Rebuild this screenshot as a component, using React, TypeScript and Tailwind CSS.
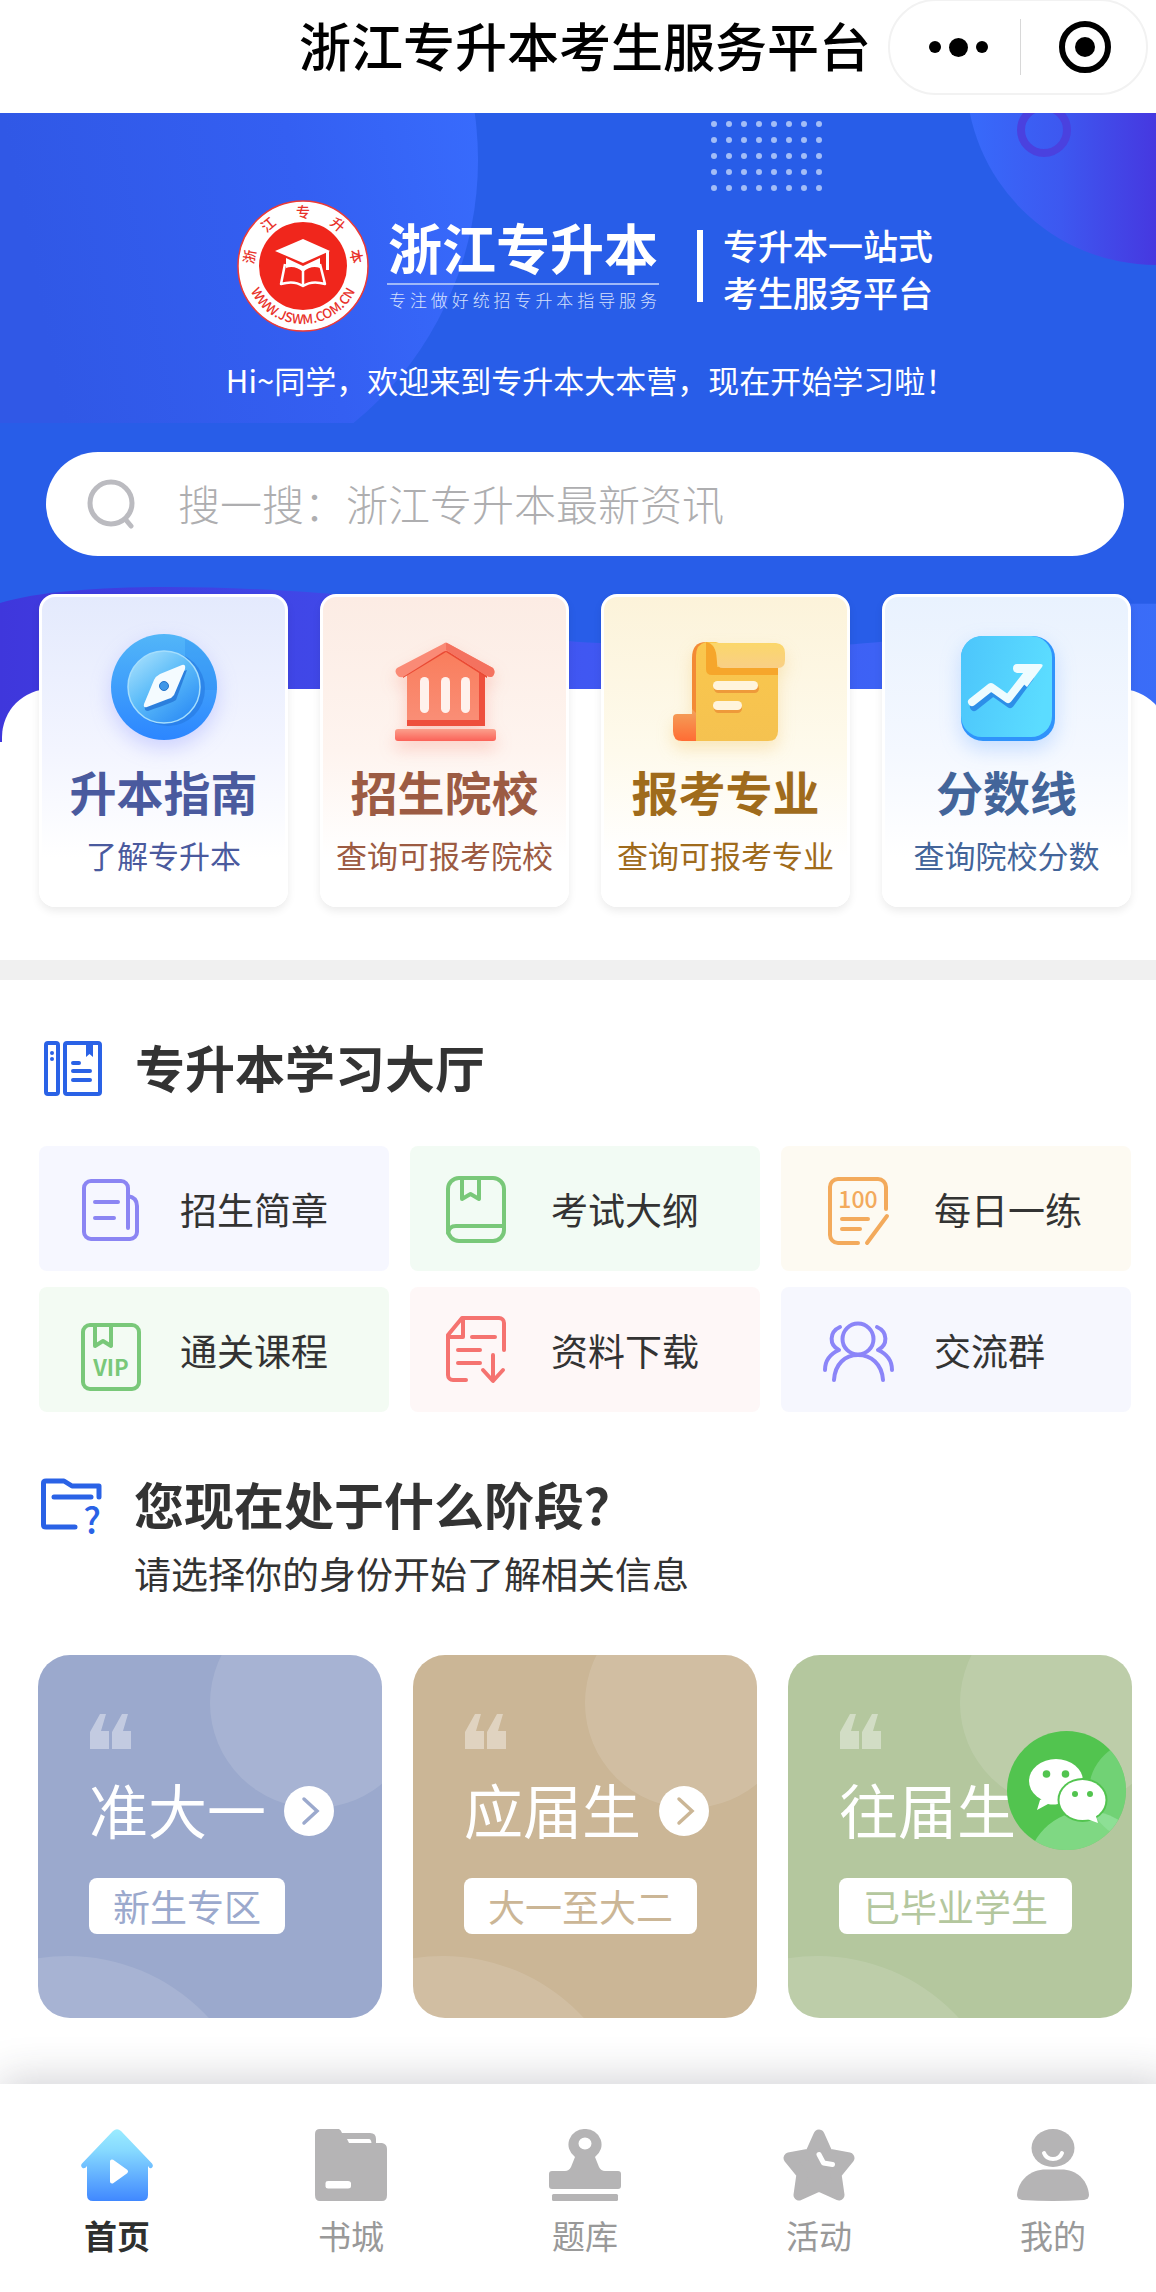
import React from 'react';

/* ---------- feature card icons ---------- */

const CompassIcon = () => (
  <svg viewBox="0 0 112 112" className="size-28 overflow-visible drop-shadow-[0_8px_10px_rgba(120,130,255,0.3)]">
    <defs>
      <linearGradient id="compassOuter" x1="0" y1="0" x2="0" y2="1">
        <stop offset="0" stopColor="#52b6f8" />
        <stop offset="1" stopColor="#2c86ff" />
      </linearGradient>
      <linearGradient id="compassInner" x1="0" y1="0" x2="0.8" y2="1">
        <stop offset="0" stopColor="#b4e6fd" />
        <stop offset="0.5" stopColor="#5cbcf9" />
        <stop offset="1" stopColor="#2b8bf5" />
      </linearGradient>
    </defs>
    <circle cx="56" cy="53" r="53" fill="url(#compassOuter)" />
    <path d="M77 5 A53 53 0 0 1 109 56 H77 Z" fill="#2b8df2" opacity="0.35" />
    <circle cx="60" cy="55" r="37" fill="#2478e0" opacity="0.6" />
    <circle cx="56" cy="53" r="36" fill="url(#compassInner)" stroke="#a5defd" strokeWidth="1.5" />
    <path d="M79 36 L68 66 Q66 68 40 77 Q36 77 37 73 L49 46 Z" fill="#2b7fdd" />
    <path d="M74 31 Q78 30 77 35 L66 61 Q64 64 60 65 L39 73 Q35 74 36 70 L46 46 Q48 42 52 40 Z" fill="#f4fbff" />
    <circle cx="56" cy="52" r="4.5" fill="#3f97e8" stroke="#2372c8" strokeWidth="1" />
  </svg>
);

const SchoolIcon = () => (
  <svg viewBox="0 0 112 112" className="size-28 overflow-visible drop-shadow-[0_8px_8px_rgba(245,110,90,0.28)]">
    <defs>
      <linearGradient id="schoolBody" x1="0" y1="0" x2="0" y2="1">
        <stop offset="0" stopColor="#f97c5a" />
        <stop offset="1" stopColor="#fa8f78" />
      </linearGradient>
      <linearGradient id="schoolBase" x1="0" y1="0" x2="0" y2="1">
        <stop offset="0" stopColor="#fba08c" />
        <stop offset="1" stopColor="#fb6258" />
      </linearGradient>
    </defs>
    <path d="M18 38 L57 12 L96 38 V92 H18 Z" fill="url(#schoolBody)" />
    <path d="M90 38 H96 V92 H18 V86 H90 Z" fill="#ee4f3c" />
    <path d="M14 44 L57 18 L98 44 V38 L57 12 L14 38 Z" fill="#ea4a34" />
    <path d="M54 10 Q57 7 60 10 L104 34 Q107 38 104 42 Q102 44 98 42 L60 18 Q57 16 54 18 L14 43 Q10 44 8 41 Q5 37 8 34 Z" fill="#fa8a76" />
    <path d="M57 9 V16 L98 42 Q102 44 104 42 Q107 38 104 34 L60 10 Z" fill="#f4725f" />
    <g fill="#fff1ec">
      <rect x="31" y="43" width="9" height="36" rx="4.5" />
      <rect x="52" y="43" width="9" height="36" rx="4.5" />
      <rect x="72" y="43" width="9" height="36" rx="4.5" />
    </g>
    <rect x="6" y="95" width="101" height="12" rx="3" fill="url(#schoolBase)" />
  </svg>
);

const ScrollIcon = () => (
  <svg viewBox="0 0 112 112" className="size-28 overflow-visible drop-shadow-[0_8px_8px_rgba(240,190,80,0.3)]">
    <defs>
      <linearGradient id="scrollRoll" x1="0" y1="0" x2="0" y2="1">
        <stop offset="0" stopColor="#fbd76a" />
        <stop offset="1" stopColor="#f9cf86" />
      </linearGradient>
      <linearGradient id="scrollFoot" x1="0" y1="0" x2="0" y2="1">
        <stop offset="0" stopColor="#f3a35c" />
        <stop offset="1" stopColor="#ff6c34" />
      </linearGradient>
      <linearGradient id="scrollBody" x1="0" y1="0" x2="0" y2="1">
        <stop offset="0" stopColor="#fac74d" />
        <stop offset="1" stopColor="#f5c250" />
      </linearGradient>
    </defs>
    <path d="M22 24 Q22 8 36 8 V80 H22 Z" fill="#f38a35" />
    <path d="M7 80 H22 V75 L27 80 V107 H12 Q3 107 3 97 V84 Q3 80 7 80 Z" fill="url(#scrollFoot)" />
    <path d="M26 22 Q26 10 36 8 H46 L108 30 V97 Q108 107 98 107 H26 Z" fill="url(#scrollBody)" />
    <path d="M36 8 Q47 10 47 28 V33 H108 V41 H42 Q36 41 36 35 Z" fill="#f6a62b" />
    <path d="M40 9 H106 Q115 10 115 19 V26 Q115 34 108 34 H53 Q47 34 47 28 Q47 13 40 9 Z" fill="url(#scrollRoll)" />
    <rect x="44" y="50" width="45" height="9" rx="4.5" fill="#ee9a3a" />
    <rect x="44" y="70" width="28" height="9" rx="4.5" fill="#ee9a3a" />
    <rect x="43" y="47" width="45" height="9" rx="4.5" fill="#fff4dc" />
    <rect x="43" y="67" width="29" height="9" rx="4.5" fill="#fff4dc" />
  </svg>
);

const TrendIcon = () => (
  <svg viewBox="0 0 112 112" className="size-28 overflow-visible drop-shadow-[0_8px_10px_rgba(90,160,255,0.3)]">
    <defs>
      <linearGradient id="trendBg" x1="0" y1="0" x2="1" y2="0.2">
        <stop offset="0" stopColor="#4cc5fb" />
        <stop offset="1" stopColor="#5bdcff" />
      </linearGradient>
    </defs>
    <rect x="10" y="2" width="94" height="105" rx="22" fill="#2f93fb" />
    <rect x="10" y="2" width="91" height="101" rx="21" fill="url(#trendBg)" />
    <path d="M23 73 L42 58 L59 70 L79 43" fill="none" stroke="#2d8fe8" strokeWidth="8" strokeLinecap="round" strokeLinejoin="round" />
    <path d="M21 68 L40 53 L57 65 L78 38" fill="none" stroke="#eefcff" strokeWidth="8" strokeLinecap="round" strokeLinejoin="round" />
    <path d="M66 30 H89 Q93 30 91 33 L76 53 L69 47 L75 39 H66 Q62 38 62 34.5 Q62 30 66 30 Z" fill="#eefcff" />
  </svg>
);

/* ---------- study hall icons ---------- */

const lineIcon = 'h-20 w-18 shrink-0 overflow-visible fill-none stroke-current';

const BrochureIcon = () => (
  <svg viewBox="0 0 72 80" className={lineIcon} strokeWidth="4" strokeLinecap="round" strokeLinejoin="round">
    <path d="M57 59 V19 a7 7 0 0 0-7-7 H20 a7 7 0 0 0-7 7 v44 a7 7 0 0 0 7 7 h39 a7 7 0 0 0 7-7 V37 c0-6-3-9-9-10" />
    <path d="M24 33 H47 M24 49 H43" />
  </svg>
);

const OutlineBookIcon = () => (
  <svg viewBox="0 0 72 80" className={lineIcon} strokeWidth="4" strokeLinecap="round" strokeLinejoin="round">
    <rect x="6" y="9" width="56" height="63" rx="11" />
    <path d="M20 9 V30 L28.5 25 L37 30 V9" />
    <path d="M6 64 Q7 57 14 57 H62" />
  </svg>
);

const PracticeIcon = () => (
  <svg viewBox="0 0 72 80" className={lineIcon} strokeWidth="4" strokeLinecap="round" strokeLinejoin="round">
    <path d="M61 40 V18 a8 8 0 0 0-8-8 H13 a8 8 0 0 0-8 8 v48 a8 8 0 0 0 8 8 h20" />
    <path d="M62 47 L42 74 M17 50 H43 M17 60 H35" />
    <text x="33" y="39" textAnchor="middle" className="fill-current stroke-none text-[23px] font-medium">100</text>
  </svg>
);

const VipBookIcon = () => (
  <svg viewBox="0 0 72 80" className={lineIcon} strokeWidth="4" strokeLinecap="round" strokeLinejoin="round">
    <rect x="12" y="15" width="56" height="64" rx="7" />
    <path d="M24 15 V36 L32 31 L40 36 V15" />
    <text x="40" y="66" textAnchor="middle" className="fill-current stroke-none text-[22px] font-bold">VIP</text>
  </svg>
);

const DownloadIcon = () => (
  <svg viewBox="0 0 72 80" className={lineIcon} strokeWidth="4" strokeLinecap="round" strokeLinejoin="round">
    <path d="M62 40 V13 a5 5 0 0 0-5-5 H20 L6 25 V65 a5 5 0 0 0 5 5 H24" />
    <path d="M21 9 V27 H7 M30 27 H53 M16 40 H38 M16 53 H38" />
    <path d="M51 45 V70 M41 60 L51 71 L61 60" />
  </svg>
);

const GroupIcon = () => (
  <svg viewBox="0 0 72 80" className={lineIcon} strokeWidth="4" strokeLinecap="round" strokeLinejoin="round">
    <circle cx="33" cy="29" r="15.5" />
    <path d="M9 70 C10 54 20 45 33 45 S57 54 58 70" />
    <path d="M15 17 C4 22 4 35 14 40 C5 44 0 51 0 60" />
    <path d="M52 17 C63 22 63 35 53 40 C62 44 67 51 67 60" />
  </svg>
);

/* ---------- section heading icons ---------- */

const HallIcon = () => (
  <svg viewBox="0 0 64 60" className="h-15 w-16 shrink-0 overflow-visible fill-none stroke-[#2a62e6]" strokeWidth="4" strokeLinecap="round">
    <rect x="7" y="7" width="12" height="51" rx="2" />
    <rect x="26" y="7" width="35" height="51" rx="2" />
    <path d="M47 7 H54 V21 L50.5 18 L47 21 Z" className="fill-[#2a62e6] stroke-none" />
    <circle cx="13" cy="17" r="2" className="fill-[#2a62e6] stroke-none" />
    <circle cx="13" cy="23" r="2" className="fill-[#2a62e6] stroke-none" />
    <path d="M34 27 H40 M34 35 H51 M34 44 H51" />
  </svg>
);

const StageIcon = () => (
  <svg viewBox="0 0 64 60" className="h-15 w-16 shrink-0 overflow-visible fill-none stroke-[#2a62e6]" strokeWidth="5" strokeLinecap="round" strokeLinejoin="round">
    <path d="M61 24 V13 H34 L26 8 H8 Q5.5 8 5.5 10 V52 Q5.5 54 8 54 H37" />
    <path d="M16 24 H53" />
    <text x="54" y="61" textAnchor="middle" className="fill-[#2a62e6] stroke-none text-[36px] font-medium">?</text>
  </svg>
);

/* ---------- tab bar icons ---------- */

const HomeTabIcon = () => (
  <svg viewBox="0 0 72 72" className="size-18">
    <defs>
      <linearGradient id="homeTab" x1="0" y1="0" x2="0" y2="1">
        <stop offset="0" stopColor="#9becff" />
        <stop offset="0.3" stopColor="#86d9ff" />
        <stop offset="1" stopColor="#4088ff" />
      </linearGradient>
    </defs>
    <path
      d="M32 2 Q36 -1.5 40 2 L71 34.5 Q73 37.5 70.5 39 Q68.5 40 67 37 V66 Q67 72 60.5 72 H12 Q6 72 6 66 V37 Q4 40 1.5 39 Q-1 37 1 34.5 Z"
      fill="url(#homeTab)"
    />
    <path d="M31 32.5 V52.5 L45 42.5 Z" fill="#fff" stroke="#fff" strokeWidth="4" strokeLinejoin="round" />
  </svg>
);

const BookTabIcon = () => (
  <svg viewBox="0 0 72 72" className="size-18 fill-current">
    <path
      fillRule="evenodd"
      d="M5 0 H24 Q26 1 27 4 H55 Q61 4 61 10 V14 H67 Q72 15 72 20 V66 Q72 72 67 72 H5 Q0 72 0 66 V5 Q0 0 5 0 Z M32 10 L34 14 H56.5 Q56 10 54 10 Z M13 52 Q10.5 52 10.5 54 V57.5 Q10.5 59.5 13 59.5 H33 Q36 59.5 36 57 V54.5 Q36 52 33 52 Z"
    />
  </svg>
);

const StampTabIcon = () => (
  <svg viewBox="0 0 72 72" className="size-18 fill-current">
    <path
      fillRule="evenodd"
      d="M36 0 A16 15.5 0 0 1 46 28 L50 38 Q52 42 56 42 H69 Q72 42 72 45 V57 Q72 60 69 60 H3 Q0 60 0 57 V45 Q0 42 3 42 H16 Q20 42 22 38 L26 28 A16 15.5 0 0 1 36 0 Z M36 8.5 A6.5 6 0 1 0 36 20.5 A6.5 6 0 1 0 36 8.5 Z"
    />
    <rect x="3" y="65" width="66" height="7" rx="1.5" />
  </svg>
);

const StarTabIcon = () => (
  <svg viewBox="0 0 72 72" className="size-18 fill-current stroke-current">
    <path
      d="M36 6 L44.5 25 L66 29 L53 45 L56 66 L36 57 L16 66 L19 45 L6 29 L27.5 25 Z"
      strokeWidth="11"
      strokeLinejoin="round"
    />
    <path d="M36 25.5 L40.5 34 L49.5 35.5" fill="none" stroke="#fff" strokeWidth="5" strokeLinecap="round" strokeLinejoin="round" />
  </svg>
);

const MineTabIcon = () => (
  <svg viewBox="0 0 72 72" className="size-18 fill-current">
    <ellipse cx="36" cy="19" rx="21.5" ry="19" />
    <path d="M27 24 C30 32 42 32 45 24" fill="none" stroke="#fff" strokeWidth="4" strokeLinecap="round" />
    <path d="M26 40.5 H47 C62 42 71 53 72 66 Q72 70 67 71 Q36 73 5 71 Q0 70 0 66 C1 53 11 42 26 40.5 Z" />
  </svg>
);

/* ---------- data ---------- */

const features = [
  {
    title: '升本指南',
    desc: '了解专升本',
    icon: <CompassIcon />,
    className: 'from-[#e4eafd] via-[#f3f5ff] text-[#4a5a9e]',
  },
  {
    title: '招生院校',
    desc: '查询可报考院校',
    icon: <SchoolIcon />,
    className: 'from-[#fcece4] via-[#fef4ef] text-[#9c5b43]',
  },
  {
    title: '报考专业',
    desc: '查询可报考专业',
    icon: <ScrollIcon />,
    className: 'from-[#fcf3da] via-[#fefaec] text-[#9f6b1c]',
  },
  {
    title: '分数线',
    desc: '查询院校分数',
    icon: <TrendIcon />,
    className: 'from-[#e9f2fe] via-[#f4f8ff] text-[#43659a]',
  },
];

const studyItems = [
  { label: '招生简章', icon: <BrochureIcon />, className: 'bg-[#f6f7ff] pl-8', color: 'text-[#8b85f3]' },
  { label: '考试大纲', icon: <OutlineBookIcon />, className: 'bg-[#f2fbf4] pl-8', color: 'text-[#79c879]' },
  { label: '每日一练', icon: <PracticeIcon />, className: 'bg-[#fdfaf2] pl-11', color: 'text-[#f3aa5c]' },
  { label: '通关课程', icon: <VipBookIcon />, className: 'bg-[#f3fbf3] pl-8', color: 'text-[#79c879]' },
  { label: '资料下载', icon: <DownloadIcon />, className: 'bg-[#fef7f7] pl-8', color: 'text-[#f57370]' },
  { label: '交流群', icon: <GroupIcon />, className: 'bg-[#f6f7fe] pl-11', color: 'text-[#8b85f8]' },
];

const stages = [
  { title: '准大一', tag: '新生专区', bg: 'bg-[#9ba9cd]', text: 'text-[#9ba9cd]' },
  { title: '应届生', tag: '大一至大二', bg: 'bg-[#cbb696]', text: 'text-[#cbb696]' },
  { title: '往届生', tag: '已毕业学生', bg: 'bg-[#b4c79e]', text: 'text-[#b4c79e]' },
];

const tabs = [
  { label: '首页', icon: <HomeTabIcon />, active: true },
  { label: '书城', icon: <BookTabIcon />, active: false },
  { label: '题库', icon: <StampTabIcon />, active: false },
  { label: '活动', icon: <StarTabIcon />, active: false },
  { label: '我的', icon: <MineTabIcon />, active: false },
];

/* ---------- sections ---------- */

function Header() {
  return (
    <header className="grid h-[113px] grid-cols-[1fr_auto_1fr] items-start bg-white">
      <h1 className="col-start-2 text-[52px] leading-[90px] font-medium text-black">
        浙江专升本考生服务平台
      </h1>
      <div className="-mt-px mr-[22px] flex h-24 w-[260px] items-center justify-self-end rounded-full border-2 border-[#f2f2f2] bg-white">
        <button type="button" aria-label="更多" className="flex h-full flex-1 items-center justify-center gap-2 pl-2">
          <span className="size-3 rounded-full bg-black" />
          <span className="size-[19px] rounded-full bg-black" />
          <span className="size-3 rounded-full bg-black" />
        </button>
        <span className="h-14 w-px bg-[#d8d8d8]" />
        <button type="button" aria-label="关闭" className="flex h-full flex-1 items-center justify-center pl-1">
          <span className="flex size-[52px] items-center justify-center rounded-full border-6 border-black">
            <span className="size-5 rounded-full bg-black" />
          </span>
        </button>
      </div>
    </header>
  );
}

function HeroBackground() {
  const dots = Array.from({ length: 40 }, (_, i) => ({ x: 714 + (i % 8) * 15, y: 124 + Math.floor(i / 8) * 16 }));

  return (
    <svg
      viewBox="0 113 1170 629"
      preserveAspectRatio="xMidYMin slice"
      className="absolute inset-x-0 top-0 h-[629px] w-full"
      aria-hidden="true"
    >
      <defs>
        <linearGradient id="leftBlob" x1="0" y1="0.5" x2="1" y2="0.3">
          <stop offset="0.3" stopColor="#3058e6" />
          <stop offset="0.7" stopColor="#345ff2" />
          <stop offset="1" stopColor="#386cfd" />
        </linearGradient>
        <linearGradient id="rightBlob" x1="0" y1="0" x2="1" y2="0">
          <stop offset="0" stopColor="#376bfb" />
          <stop offset="0.25" stopColor="#3d58f0" />
          <stop offset="0.5" stopColor="#4638e0" />
        </linearGradient>
        <linearGradient id="wave" x1="0" y1="0" x2="1" y2="0">
          <stop offset="0" stopColor="#3f37dc" />
          <stop offset="0.28" stopColor="#4048e8" />
          <stop offset="0.5" stopColor="#4057f2" />
          <stop offset="1" stopColor="#3a6df8" />
        </linearGradient>
        <clipPath id="blobClip">
          <rect x="0" y="113" width="1170" height="310" />
        </clipPath>
      </defs>
      <rect x="0" y="113" width="1170" height="629" fill="#285de8" />
      <circle cx="138" cy="160" r="340" fill="url(#leftBlob)" clipPath="url(#blobClip)" />
      <circle cx="1156" cy="75" r="190" fill="url(#rightBlob)" />
      <circle cx="1044" cy="130" r="23" fill="none" stroke="#4a41df" strokeWidth="8" />
      {dots.map((d) => (
        <circle key={`${d.x}-${d.y}`} cx={d.x} cy={d.y} r="3" fill="#a3bdf7" />
      ))}
      <path d="M0 603 C60 585 180 583 320 593 C430 600 500 640 600 643 C720 650 850 650 930 635 C1010 605 1100 603 1170 604 V742 H0 Z" fill="url(#wave)" />
      <rect x="2" y="689" width="1166" height="120" rx="48" fill="#fff" />
    </svg>
  );
}

function SchoolBadge() {
  const ring = [
    { char: '浙', angle: -80 },
    { char: '江', angle: -40 },
    { char: '专', angle: 0 },
    { char: '升', angle: 40 },
    { char: '本', angle: 80 },
  ];

  return (
    <svg viewBox="-66 -66 132 132" className="size-[132px]" role="img" aria-label="浙江专升本">
      <circle r="65" fill="#fff" stroke="#ee3a35" strokeWidth="1.5" />
      <circle r="44" fill="#f0261c" />
      {ring.map((r) => (
        <text key={r.char} y="-49" textAnchor="middle" transform={`rotate(${r.angle})`} className="fill-[#e8322b] text-[14px] font-medium">
          {r.char}
        </text>
      ))}
      <path id="badgeArc" d="M-58 0 A58 58 0 0 0 58 0" fill="none" />
      <text className="fill-[#e8322b] text-[13px] font-medium" textAnchor="middle">
        <textPath href="#badgeArc" startOffset="50%">WWW.JSWM.COM.CN</textPath>
      </text>
      <g fill="#fff">
        <path d="M0 -27 L27 -15 L0 -3 L-28 -15 Z" />
        <path d="M-17 -8 L0 0 L17 -8 V2 Q8 -1 0 6 Q-8 -1 -17 2 Z" />
        <path d="M23 -15 H26 V4 H23 Z" />
      </g>
      <path
        d="M-18 -2 L-22 18 Q-9 14 0 20 Q9 14 22 18 L17 -2 M0 4 V19"
        fill="none"
        stroke="#fff"
        strokeWidth="2.5"
        strokeLinejoin="round"
      />
    </svg>
  );
}

function Hero() {
  return (
    <section className="relative pb-[53px]">
      <HeroBackground />
      <div className="relative pt-[87px]">
        <div className="flex items-center justify-center text-white">
          <SchoolBadge />
          <div className="ml-[18px] w-[272px]">
            <p className="border-b-2 border-[#9fb8f8] pb-1.5 text-center text-[54px] leading-[60px] font-bold">
              浙江专升本
            </p>
            <p className="px-0.5 text-[17px] leading-[30px] font-light text-[#d5e0fd] [text-align-last:justify]">
              专注做好统招专升本指导服务
            </p>
          </div>
          <span className="ml-[38px] h-18 w-1.5 bg-white" />
          <p className="ml-5 pt-1 text-[35px] leading-[47px] font-medium">
            专升本一站式
            <br />
            考生服务平台
          </p>
        </div>
        <p className="mt-7 pl-3 text-center text-[31px] leading-10 text-white">
          Hi~同学，欢迎来到专升本大本营，现在开始学习啦！
        </p>

        <label className="mx-[46px] mt-[52px] flex h-[104px] items-center gap-10 rounded-full bg-white pr-10 pl-10">
          <svg viewBox="0 0 50 50" className="size-[50px] shrink-0 fill-none stroke-[#bbbbc0]" strokeWidth="5" strokeLinecap="round">
            <circle cx="25" cy="24" r="21" />
            <path d="M40 41 L45 47" />
          </svg>
          <input
            type="search"
            aria-label="搜索"
            placeholder="搜一搜：浙江专升本最新资讯"
            className="min-w-0 flex-1 bg-transparent pb-0.5 pl-0.5 text-[42px] leading-[60px] font-light text-[#333] outline-none placeholder:text-[#aeaeb0]"
          />
        </label>

        <div className="mx-[39px] mt-[38px] grid grid-cols-4 gap-8">
          {features.map((f) => (
            <a
              key={f.title}
              href="#"
              className={`flex flex-col items-center rounded-2xl border-3 border-white bg-linear-to-b to-white to-85% pt-[37px] pb-[29px] shadow-[0_4px_8px_rgba(0,0,0,0.08)] ${f.className}`}
            >
              {f.icon}
              <h3 className="mt-[17px] text-[47px] leading-14 font-bold">{f.title}</h3>
              <p className="mt-4 text-[31px] leading-10 whitespace-nowrap">{f.desc}</p>
            </a>
          ))}
        </div>
      </div>
    </section>
  );
}

function StudyHall() {
  return (
    <section className="px-[39px] pt-14">
      <div className="flex items-center gap-8">
        <HallIcon />
        <h2 className="text-[50px] leading-[60px] font-bold">专升本学习大厅</h2>
      </div>
      <div className="mt-[50px] grid grid-cols-3 gap-x-[21px] gap-y-4">
        {studyItems.map((item) => (
          <a key={item.label} href="#" className={`flex h-[125px] items-center gap-[37px] rounded-lg ${item.className}`}>
            <span className={item.color}>{item.icon}</span>
            <span className="text-[37px] leading-[44px] whitespace-nowrap">{item.label}</span>
          </a>
        ))}
      </div>
    </section>
  );
}

function WechatButton() {
  return (
    <button type="button" aria-label="微信客服" className="absolute top-[76px] right-[6px] rounded-full">
      <svg viewBox="0 0 119 119" className="size-[119px]">
        <defs>
          <clipPath id="wechatClip">
            <circle cx="59.5" cy="59.5" r="59.5" />
          </clipPath>
        </defs>
        <g clipPath="url(#wechatClip)">
          <rect width="119" height="119" fill="#52c44f" />
          <circle cx="132" cy="60" r="50" fill="#8fdf9b" opacity="0.5" />
          <circle cx="80" cy="140" r="60" fill="#a4eaae" opacity="0.55" />
        </g>
        <path d="M33 69 L30 79 L41 73 Q46 74 51 73 L50 60 Z" fill="#fff" />
        <ellipse cx="49" cy="50" rx="27" ry="22" fill="#fff" />
        <ellipse cx="75.5" cy="69" rx="25" ry="22" fill="#52c44f" />
        <ellipse cx="75.5" cy="69" rx="23" ry="20" fill="#fff" />
        <path d="M80 88 L91 92 L88 82 Z" fill="#fff" />
        <g fill="#52c44f">
          <circle cx="39.5" cy="43" r="3.8" />
          <circle cx="58.5" cy="43" r="3.8" />
          <circle cx="68" cy="63" r="3" />
          <circle cx="83" cy="63" r="3" />
        </g>
      </svg>
    </button>
  );
}

function Stages() {
  return (
    <section className="px-[38px] pt-[61px] pb-[66px]">
      <div className="flex items-start gap-8">
        <StageIcon />
        <div>
          <h2 className="text-[50px] leading-[60px] font-bold">您现在处于什么阶段？</h2>
          <p className="mt-4 text-[37px] leading-[48px]">请选择你的身份开始了解相关信息</p>
        </div>
      </div>
      <div className="relative mt-[58px] grid grid-cols-3 gap-[31px]">
        {stages.map((s) => (
          <a
            key={s.title}
            href="#"
            className={`relative h-[363px] overflow-hidden rounded-[32px] pt-[59px] pl-[51px] text-white ${s.bg}`}
          >
            <svg
              viewBox="0 0 344 363"
              preserveAspectRatio="xMaxYMin slice"
              className="absolute inset-0 size-full"
              aria-hidden="true"
            >
              <circle cx="277" cy="48" r="105" fill="#fff" opacity="0.12" />
              <circle cx="30" cy="492" r="191" fill="#fff" opacity="0.12" />
            </svg>
            <div className="relative">
              <svg viewBox="0 0 44 35" className="h-[35px] w-11 fill-white/40" aria-hidden="true">
                <path d="M1 35 V18 L11 0 H17 L12 17 H20 V35 Z M23 35 V18 L33 0 H39 L34 17 H42 V35 Z" />
              </svg>
              <div className="mt-6 flex items-center gap-[18px]">
                <h3 className="text-[59px] leading-[72px]">{s.title}</h3>
                <span className={`mt-1 flex size-[50px] items-center justify-center rounded-full bg-white ${s.text}`}>
                  <svg viewBox="0 0 50 50" className="size-[50px] fill-none stroke-current" strokeWidth="3.5" strokeLinecap="round">
                    <path d="M20 13 L33 25 L20 37" />
                  </svg>
                </span>
              </div>
              <span className={`mt-[33px] inline-block rounded-lg bg-white px-6 text-[37px] leading-14 ${s.text}`}>
                {s.tag}
              </span>
            </div>
          </a>
        ))}
        <WechatButton />
      </div>
    </section>
  );
}

function TabBar() {
  return (
    <nav className="relative grid grid-cols-5 bg-white pt-[45px] pb-[34px] shadow-[0_-4px_40px_rgba(40,40,60,0.22)]">
      {tabs.map((t) => (
        <a
          key={t.label}
          href="#"
          aria-current={t.active ? 'page' : undefined}
          className={`flex flex-col items-center ${t.active ? 'font-bold text-[#2e302f]' : 'text-[#b5b4b5]'}`}
        >
          {t.icon}
          <span className={`mt-3 text-[33px] leading-[44px] ${t.active ? '' : 'text-[#999]'}`}>{t.label}</span>
        </a>
      ))}
    </nav>
  );
}

export default function App() {
  return (
    <div className="overflow-hidden bg-white font-['Noto_Sans_CJK_SC',sans-serif] text-[#333]">
      <div className="-mr-3.5">
        <Header />
        <main>
          <Hero />
          <div className="h-5 bg-[#f0f0f0]" />
          <StudyHall />
          <Stages />
        </main>
        <TabBar />
      </div>
    </div>
  );
}
